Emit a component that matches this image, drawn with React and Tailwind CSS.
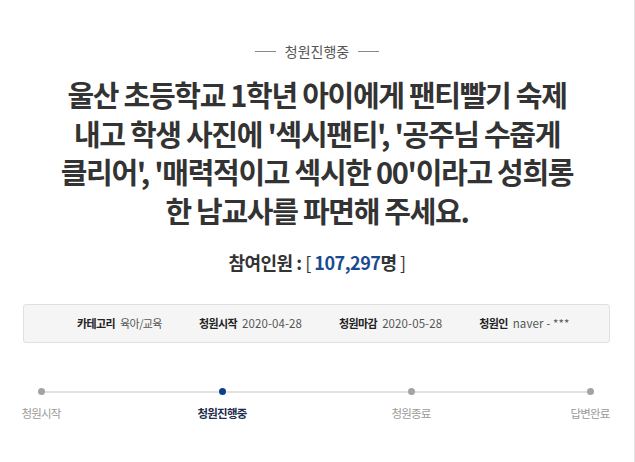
import React from "react";

const font = "font-['Noto_Sans_CJK_KR','Noto_Sans',sans-serif]";

const info = [
  { label: "카테고리", value: "육아/교육", tight: true },
  { label: "청원시작", value: "2020-04-28" },
  { label: "청원마감", value: "2020-05-28" },
  { label: "청원인", value: "naver - ***" },
];

function Dot({ active }) {
  return (
    <span
      className={
        "block w-[7px] h-[7px] rounded-full shrink-0 " +
        (active ? "bg-[#0d3f8f]" : "bg-[#a3a3a3]")
      }
    />
  );
}

export default function App() {
  return (
    <div className={`w-[635px] h-[462px] bg-white border-r border-[#e4e4e4] overflow-hidden ${font}`}>
      {/* status heading */}
      <div className="pt-[41px] flex items-center justify-center gap-[9px] h-[61px]">
        <span className="block w-[21px] h-px bg-[#8a8a8a]" />
        <span className="text-[14px] leading-[20px] text-[#555]">청원진행중</span>
        <span className="block w-[21px] h-px bg-[#8a8a8a]" />
      </div>

      {/* title */}
      <h1 className="mt-[14px] text-center text-[29px] leading-[38.5px] font-bold text-[#333] tracking-[-1.3px]">
        <span className="block">울산 초등학교 1학년 아이에게 팬티빨기 숙제</span>
        <span className="block">내고 학생 사진에 '섹시팬티', '공주님 수줍게</span>
        <span className="block">클리어', '매력적이고 섹시한 00'이라고 성희롱</span>
        <span className="block">한 남교사를 파면해 주세요.</span>
      </h1>

      {/* count */}
      <div className="mt-[21px] text-center text-[18px] leading-[24px] text-[#333] tracking-[-0.5px]">
        <span className="font-bold">참여인원 : </span>
        <span>[ </span>
        <span className="font-bold text-[#1b4a91]">107,297</span>
        <span className="font-bold">명</span>
        <span> ]</span>
      </div>

      {/* info box */}
      <div className="mt-[30px] ml-[23px] w-[587px] h-[39px] bg-[#f5f5f5] border border-[#e0e0e0] rounded-[3px] flex items-center pl-[53px] gap-[37px] text-[11px]">
        {info.map((it) => (
          <div key={it.label} className="flex items-center gap-[5px]">
            <span className="font-bold text-[#222] tracking-[-0.6px]">{it.label}</span>
            <span
              className={
                "text-[#555] " +
                (it.tight ? "tracking-[-0.6px]" : "text-[11.5px] tracking-[0.1px]")
              }
            >
              {it.value}
            </span>
          </div>
        ))}
      </div>

      {/* progress */}
      <div className="mt-[45px] ml-[38px] flex items-center">
        <Dot />
        <span className="block w-[174px] h-[2px] bg-[#e2e2e2]" />
        <Dot active />
        <span className="block w-[182px] h-[2px] bg-[#e2e2e2]" />
        <Dot />
        <span className="block w-[172px] h-[2px] bg-[#e2e2e2]" />
        <Dot />
      </div>
      <div className="mt-[10px] ml-[1px] flex text-[11.5px] leading-[16px] tracking-[-0.8px] text-[#9a9a9a]">
        <span className="w-[80px] text-center">청원시작</span>
        <span className="ml-[101px] w-[80px] text-center font-bold text-[#1e2d4d]">청원진행중</span>
        <span className="ml-[109px] w-[80px] text-center">청원종료</span>
        <span className="ml-[99px] w-[80px] text-center">답변완료</span>
      </div>
    </div>
  );
}
